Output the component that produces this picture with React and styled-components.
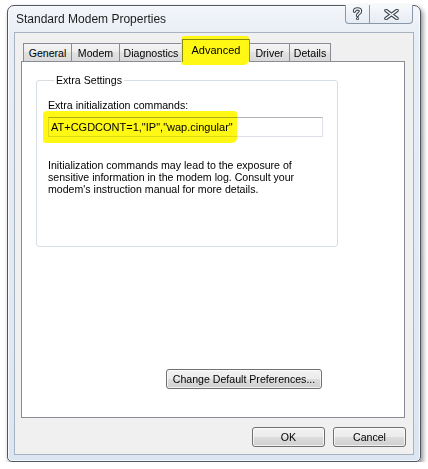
import React from "react";
import styled, { createGlobalStyle } from "styled-components";

const GlobalStyle = createGlobalStyle`
  html, body { margin: 0; padding: 0; background: #ffffff; }
  body { font-family: "Liberation Sans", Arial, sans-serif; color: #000; }
`;

const Stage = styled.div`
  padding: 5px 0 0 7px;
`;

const Window = styled.div`
  width: 414px;
  box-sizing: border-box;
  border: 1px solid #4d5661;
  border-radius: 7px 7px 5px 5px;
  background: linear-gradient(180deg, #f3f6fa 0, #e8eef6 30px, #dce6f2 100%);
  box-shadow: inset 0 0 0 1px rgba(255, 255, 255, 0.75), 2px 3px 5px rgba(0, 0, 0, 0.45);
  padding: 0 6px 6px;
`;

const TitleBar = styled.div`
  display: flex;
  align-items: flex-start;
  height: 26px;
`;

const Title = styled.div`
  margin: 6px 0 0 2px;
  font-size: 12px;
  line-height: 14px;
  color: #1c1c1c;
`;

const CaptionGroup = styled.div`
  margin-left: auto;
  margin-right: 1px;
  margin-top: -1px;
  display: flex;
  height: 18px;
  border: 1px solid #8a97a8;
  border-top: none;
  border-radius: 0 0 4px 4px;
  background: linear-gradient(180deg, #f7f9fc, #e6ecf3);
  overflow: hidden;
`;

const CaptionButton = styled.div`
  width: ${(p) => p.w}px;
  display: flex;
  align-items: center;
  justify-content: center;
  & + & { border-left: 1px solid #8a97a8; }
`;

const Client = styled.div`
  box-sizing: border-box;
  border: 1px solid #a7b3c1;
  background: #f0f0f0;
  padding: 6px 8px 7px 6px;
  display: flex;
  flex-direction: column;
`;

const TabStrip = styled.div`
  display: flex;
  align-items: flex-end;
  height: 22px;
  padding-left: 2px;
`;

const Tab = styled.div`
  position: relative;
  z-index: ${(p) => (p.selected ? 2 : 1)};
  box-sizing: border-box;
  width: ${(p) => p.w}px;
  height: ${(p) => (p.selected ? 23 : 18)}px;
  margin-bottom: ${(p) => (p.selected ? -1 : 0)}px;
  & + & { margin-left: -1px; }
  border: 1px solid #898c95;
  border-bottom: none;
  background: ${(p) =>
    p.selected
      ? "#ffffff"
      : "linear-gradient(180deg, #f4f4f4 0%, #ececec 50%, #e2e2e2 50%, #d9d9d9 100%)"};
  display: flex;
  align-items: center;
  justify-content: center;
  padding-bottom: ${(p) => (p.selected ? 2 : 0)}px;
  font-size: ${(p) => (p.selected ? 11 : 10.6)}px;
  line-height: 12px;
  white-space: nowrap;
`;

const Highlight = styled.span`
  position: absolute;
  top: ${(p) => p.t}px;
  left: ${(p) => p.l}px;
  width: ${(p) => p.w}px;
  height: ${(p) => p.h}px;
  background: rgb(255, 247, 20);
  mix-blend-mode: multiply;
  border-radius: 4px 3px 5px 3px;
  pointer-events: none;
`;

const Panel = styled.div`
  height: 357px;
  box-sizing: border-box;
  border: 1px solid #898c95;
  background: #ffffff;
  padding: 12px 0 0 14px;
  display: flex;
  flex-direction: column;
  align-items: flex-start;
`;

const Group = styled.fieldset`
  margin: 0;
  min-width: 0;
  width: 302px;
  box-sizing: border-box;
  border: 1px solid #d5dfe5;
  border-radius: 3px;
  padding: 13px 14px 51px 11px;
`;

const Legend = styled.legend`
  padding: 0 2px;
  margin-left: 6px;
  font-size: 10.6px;
  line-height: 12px;
`;

const FieldLabel = styled.div`
  font-size: 10.6px;
  line-height: 12px;
`;

const InputWrap = styled.div`
  position: relative;
  margin-top: 6px;
  width: 275px;
  height: 20px;
`;

const TextInput = styled.input`
  display: block;
  box-sizing: border-box;
  width: 100%;
  height: 20px;
  margin: 0;
  border: 1px solid #dde1e7;
  border-top-color: #adb1b9;
  padding: 0 0 0 2px;
  font-family: "Liberation Sans", Arial, sans-serif;
  font-size: 11px;
  color: #000;
  background: #fff;
  outline: none;
`;

const Note = styled.p`
  margin: 22px 0 0;
  font-size: 10.6px;
  line-height: 12px;
`;

const Button = styled.button`
  box-sizing: border-box;
  width: ${(p) => p.w}px;
  height: 20px;
  margin: 0;
  padding: 0;
  border: 1px solid #707070;
  border-radius: 3px;
  background: linear-gradient(180deg, #f2f2f2 0%, #ebebeb 50%, #dddddd 50%, #cfcfcf 100%);
  box-shadow: inset 0 0 0 1px rgba(255, 255, 255, 0.7);
  font-family: "Liberation Sans", Arial, sans-serif;
  font-size: 10.6px;
  color: #000;
`;

const PrefButton = styled(Button)`
  margin: 122px 0 0 130px;
`;

const ButtonRow = styled.div`
  display: flex;
  justify-content: flex-end;
  gap: 8px;
  margin: 9px -1px 0 0;
`;

const HelpGlyph = () => (
  <svg width="11" height="14" viewBox="0 0 11 14">
    <g fill="none" strokeLinecap="round" strokeLinejoin="round">
      <path d="M2.5 4.2 C2.5 1.2 8.5 1.2 8.5 4.2 C8.5 6.4 5.5 6.5 5.5 8.6" stroke="#3d4753" strokeWidth="3.4" />
      <circle cx="5.5" cy="11.6" r="1.5" fill="#3d4753" />
      <path d="M2.5 4.2 C2.5 1.2 8.5 1.2 8.5 4.2 C8.5 6.4 5.5 6.5 5.5 8.6" stroke="#ffffff" strokeWidth="1.3" />
      <circle cx="5.5" cy="11.6" r="0.6" fill="#ffffff" />
    </g>
  </svg>
);

const CloseGlyph = () => (
  <svg width="15" height="11" viewBox="0 0 15 11">
    <g strokeLinecap="round">
      <path d="M2 1.5 L13 9.5 M13 1.5 L2 9.5" stroke="#3d4753" strokeWidth="3.6" />
      <path d="M2 1.5 L13 9.5 M13 1.5 L2 9.5" stroke="#ffffff" strokeWidth="1.5" />
    </g>
  </svg>
);

const tabs = [
  { label: "General", w: 49 },
  { label: "Modem", w: 49 },
  { label: "Diagnostics", w: 64 },
  { label: "Advanced", w: 68, selected: true },
  { label: "Driver", w: 41 },
  { label: "Details", w: 42 },
];

export default function App() {
  return (
    <>
      <GlobalStyle />
      <Stage>
        <Window>
          <TitleBar>
            <Title>Standard Modem Properties</Title>
            <CaptionGroup>
              <CaptionButton w={23}>
                <HelpGlyph />
              </CaptionButton>
              <CaptionButton w={42}>
                <CloseGlyph />
              </CaptionButton>
            </CaptionGroup>
          </TitleBar>
          <Client>
            <TabStrip>
              {tabs.map((t) => (
                <Tab key={t.label} w={t.w} selected={t.selected}>
                  {t.label}
                  {t.selected && <Highlight t={-4} l={-2} w={68} h={29} />}
                </Tab>
              ))}
            </TabStrip>
            <Panel>
              <Group>
                <Legend>Extra Settings</Legend>
                <FieldLabel>Extra initialization commands:</FieldLabel>
                <InputWrap>
                  <TextInput readOnly defaultValue={'AT+CGDCONT=1,"IP","wap.cingular"'} />
                  <Highlight t={-6} l={-5} w={194} h={32} />
                </InputWrap>
                <Note>
                  Initialization commands may lead to the exposure of
                  <br />
                  sensitive information in the modem log. Consult your
                  <br />
                  modem's instruction manual for more details.
                </Note>
              </Group>
              <PrefButton w={156}>Change Default Preferences...</PrefButton>
            </Panel>
            <ButtonRow>
              <Button w={73}>OK</Button>
              <Button w={73}>Cancel</Button>
            </ButtonRow>
          </Client>
        </Window>
      </Stage>
    </>
  );
}
